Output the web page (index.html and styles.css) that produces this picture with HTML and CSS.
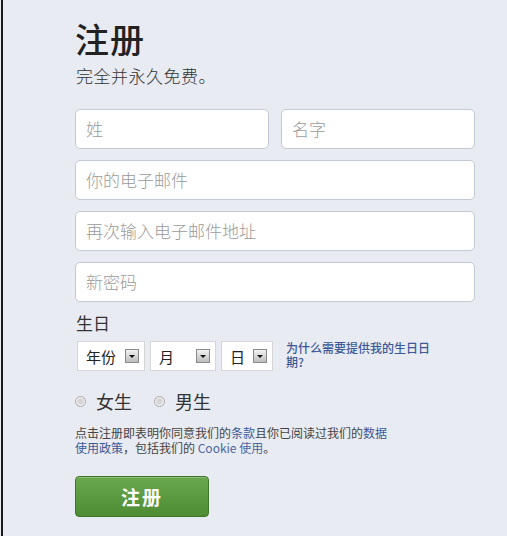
FILE: index.html
```html
<!DOCTYPE html>
<html lang="zh-CN">
<head>
    <meta charset="UTF-8">
    <title>注册</title>
    <link rel="stylesheet" href="styles.css">
</head>
<body>
    <div class="page">
        <div class="signup">
            <h1 class="title">注册</h1>
            <p class="subtitle">完全并永久免费。</p>

            <div class="fields">
                <div class="name-row">
                    <div class="field">姓</div>
                    <div class="field">名字</div>
                </div>
                <div class="field">你的电子邮件</div>
                <div class="field">再次输入电子邮件地址</div>
                <div class="field">新密码</div>
            </div>

            <div class="birthday">
                <div class="label">生日</div>
                <div class="birthday-row">
                    <div class="pick year">年份<span class="arrow"></span></div>
                    <div class="pick month">月<span class="arrow"></span></div>
                    <div class="pick day">日<span class="arrow"></span></div>
                    <a class="why" href="#">为什么需要提供我的生日日期?</a>
                </div>
            </div>

            <div class="gender">
                <label class="radio"><span class="dot"></span>女生</label>
                <label class="radio"><span class="dot"></span>男生</label>
            </div>

            <p class="terms">点击注册即表明你同意我们的<a href="#">条款</a>且你已阅读过我们的<a href="#">数据使用政策</a>，包括我们的 <a href="#" class="light">Cookie 使用</a>。</p>

            <button class="submit">注册</button>
        </div>
    </div>
</body>
</html>
```

FILE: styles.css
```css
* {
    margin: 0;
    padding: 0;
    box-sizing: border-box;
}

body {
    background: #e9ebf2;
    font-family: "Noto Sans CJK SC", "Liberation Sans", sans-serif;
    color: #333;
    width: 507px;
    height: 536px;
    overflow: hidden;
}

.page {
    margin-left: 1px;
    border-left: 2px solid #1a1a1a;
    height: 536px;
}

.signup {
    padding: 17px 0 0 72px;
    width: 472px;
}

.title {
    font-size: 34px;
    font-weight: 500;
    line-height: 44px;
    color: #222;
    letter-spacing: 1px;
}

.subtitle {
    font-size: 17px;
    font-weight: 300;
    line-height: 24px;
    margin-top: 3px;
    margin-left: 1px;
    letter-spacing: 0.5px;
}

.fields {
    display: flex;
    flex-direction: column;
    gap: 11px;
    margin-top: 21px;
}

.name-row {
    display: flex;
    gap: 12px;
}

.name-row .field {
    flex: 1;
}

.field {
    height: 40px;
    background: #fff;
    border: 1px solid #c3c9d4;
    border-radius: 5px;
    padding-left: 10px;
    font-size: 17px;
    font-weight: 300;
    line-height: 38px;
    color: #9a9a9a;
}

.birthday {
    margin-top: 9px;
    padding-left: 1px;
}

.label {
    font-size: 17px;
    line-height: 24px;
}

.birthday-row {
    display: flex;
    align-items: flex-start;
    gap: 5px;
    margin-top: 6px;
    padding-left: 1px;
}

.pick {
    height: 30px;
    background: #fff;
    border: 1px solid #d6d6d6;
    display: flex;
    align-items: center;
    justify-content: space-between;
    padding: 0 5px 0 8px;
    font-size: 15px;
    color: #222;
}

.year {
    width: 68px;
}

.month {
    width: 66px;
}

.day {
    width: 52px;
}

.arrow {
    width: 14px;
    height: 14px;
    border: 1px solid #8a8a8a;
    background: linear-gradient(#f2f2f2, #bdbdbd);
    position: relative;
}

.arrow::after {
    content: "";
    position: absolute;
    left: 3px;
    top: 5px;
    border-left: 3px solid transparent;
    border-right: 3px solid transparent;
    border-top: 3px solid #111;
}

.why {
    width: 150px;
    margin-left: 8px;
    font-size: 12px;
    line-height: 14px;
    color: #3b5998;
    text-decoration: none;
    font-weight: 500;
}

.gender {
    display: flex;
    gap: 22px;
    margin-top: 18px;
}

.radio {
    display: flex;
    align-items: center;
    font-size: 18px;
    line-height: 24px;
    color: #333;
}

.dot {
    width: 11px;
    height: 11px;
    border-radius: 50%;
    border: 1px solid #a8a8a8;
    background: radial-gradient(circle, #d4d4d4 30%, #f4f4f4 70%);
    margin-right: 10px;
}

.terms {
    width: 315px;
    margin-top: 12px;
    font-size: 12px;
    line-height: 15px;
    color: #444;
}

.terms a {
    color: #3b5998;
    text-decoration: none;
}

.terms a.light {
    color: #4b67a1;
}

.submit {
    display: block;
    margin-top: 21px;
    width: 134px;
    height: 41px;
    border: 1px solid #3f7528;
    border-radius: 4px;
    background: linear-gradient(#69a84f, #4f8d35);
    color: #fff;
    font-family: "Noto Sans CJK SC", sans-serif;
    font-size: 19px;
    font-weight: 700;
    letter-spacing: 2px;
    box-shadow: inset 0 1px 0 rgba(255, 255, 255, 0.25);
}
```
